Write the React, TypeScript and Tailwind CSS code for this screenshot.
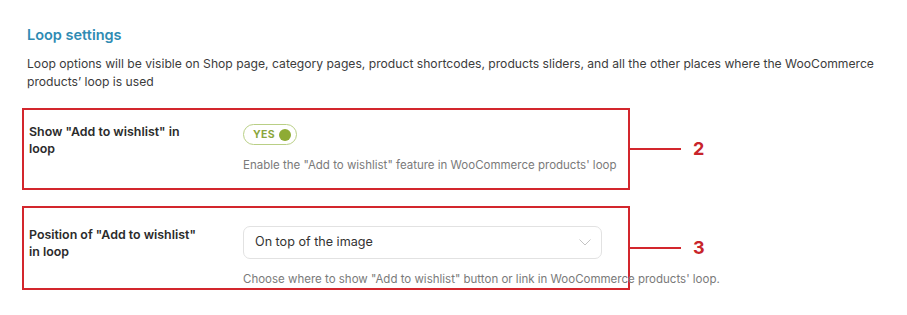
import React from 'react';

const font = { fontFamily: 'Inter, "Liberation Sans", sans-serif' };

const Annot = ({ n }: { n: string }) => (
  <div className="flex items-center">
    <div className="h-[2px] w-[51px] bg-[#d3262d]" />
    <span className="ml-[12px] text-[18px] font-bold leading-none text-[#c8242b]">{n}</span>
  </div>
);

const App = () => {
  return (
    <div className="h-[315px] w-[907px] bg-white text-[#3a3a3a]" style={font}>
      <div className="pl-[27px] pt-[26px]">
        <h2 className="text-[14.5px] font-semibold leading-[18px] text-[#2f8bb3]">Loop settings</h2>
        <p className="mt-[11px] w-[870px] text-[12.15px] leading-[18px] text-[#3c3c3c]">
          Loop options will be visible on Shop page, category pages, product shortcodes, products sliders, and all the other places where the WooCommerce products’ loop is used
        </p>
      </div>

      <div className="ml-[22px] mt-[17px] flex flex-col gap-[16px]">
        {/* Row 1 */}
        <div className="flex items-center">
          <div className="flex h-[82px] w-[608px] shrink-0 border-2 border-[#d3262d] pl-[5px] pt-[13px]">
            <div className="w-[214px] shrink-0 text-[12.4px] font-semibold leading-[17px] text-[#2b2b2b]">
              Show "Add to wishlist" in
              <br />
              loop
            </div>
            <div className="flex flex-col pt-[1px]">
              <div className="flex h-[21px] w-[54px] items-center rounded-full border border-[#b9cf85] pl-[9px] pr-[5px]">
                <span className="text-[10.5px] font-bold tracking-[0.3px] text-[#8aa63c]">YES</span>
                <span className="ml-auto h-[12px] w-[12px] rounded-full bg-[#8eab34]" />
              </div>
              <p className="mt-[12px] whitespace-nowrap text-[11.5px] text-[#7a7a7a]">
                Enable the "Add to wishlist" feature in WooCommerce products' loop
              </p>
            </div>
          </div>
          <Annot n="2" />
        </div>

        {/* Row 2 */}
        <div className="flex items-center">
          <div className="flex h-[84px] w-[608px] shrink-0 border-2 border-[#d3262d] pl-[5px] pt-[18px]">
            <div className="w-[214px] shrink-0 text-[12.4px] font-semibold leading-[17px] text-[#2b2b2b]">
              Position of "Add to wishlist"
              <br />
              in loop
            </div>
            <div className="flex flex-col">
              <div className="flex h-[33px] w-[359px] items-center rounded-[7px] border border-[#e2e2e2] pl-[11px] pr-[10px]">
                <span className="text-[12.6px] text-[#333]">On top of the image</span>
                <svg className="ml-auto" width="12" height="7" viewBox="0 0 12 7" fill="none">
                  <path d="M0.5 0.5L6 6L11.5 0.5" stroke="#c4c4c4" strokeWidth="1" />
                </svg>
              </div>
              <p className="mt-[12px] whitespace-nowrap text-[11.5px] text-[#7a7a7a]">
                Choose where to show "Add to wishlist" button or link in WooCommerce products' loop.
              </p>
            </div>
          </div>
          <Annot n="3" />
        </div>
      </div>
    </div>
  );
};

export default App;
